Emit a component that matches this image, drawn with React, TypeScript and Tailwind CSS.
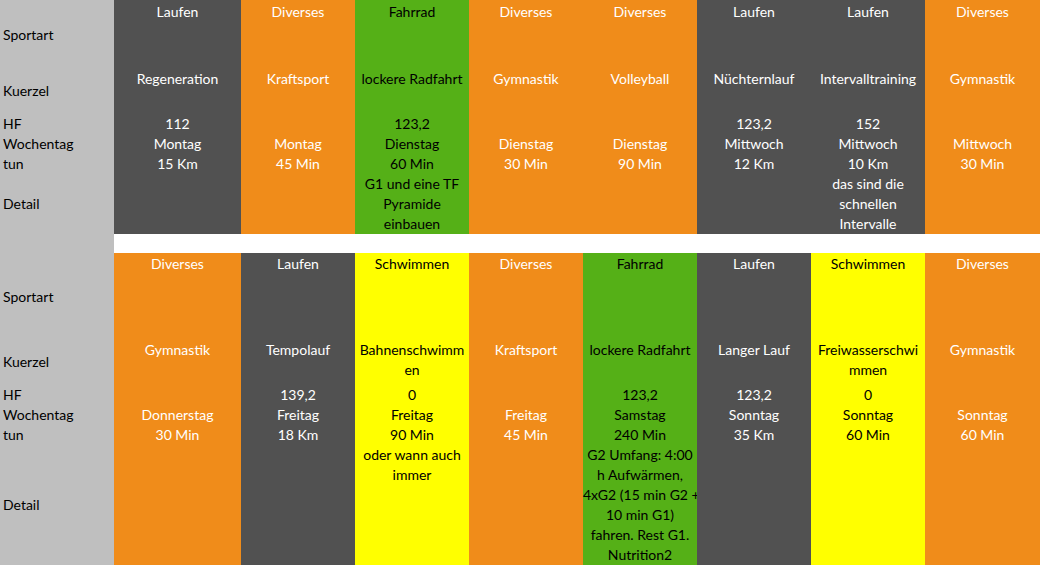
import React from "react";

type Tone = "dark" | "orange" | "green" | "yellow";

type Entry = {
  tone: Tone;
  sport: string;
  kuerzel: string[];
  rest: string[];
};

// Excel-like week plan: two blocks of 8 day-columns, label column on the left.
const TONE: Record<Tone, string> = {
  dark: "bg-[#515151] text-white",
  orange: "bg-[#f08c1a] text-white",
  green: "bg-[#55b017] text-black",
  yellow: "bg-[#ffff00] text-black",
};

const WIDTHS = ["w-[127px]", "w-[114px]", "w-[114px]", "w-[114px]", "w-[114px]", "w-[114px]", "w-[114px]", "w-[115px]"];

const WEEK_ONE: Entry[] = [
  { tone: "dark", sport: "Laufen", kuerzel: ["Regeneration"], rest: ["112", "Montag", "15 Km"] },
  { tone: "orange", sport: "Diverses", kuerzel: ["Kraftsport"], rest: ["", "Montag", "45 Min"] },
  {
    tone: "green",
    sport: "Fahrrad",
    kuerzel: ["lockere Radfahrt"],
    rest: ["123,2", "Dienstag", "60 Min", "G1 und eine TF", "Pyramide", "einbauen"],
  },
  { tone: "orange", sport: "Diverses", kuerzel: ["Gymnastik"], rest: ["", "Dienstag", "30 Min"] },
  { tone: "orange", sport: "Diverses", kuerzel: ["Volleyball"], rest: ["", "Dienstag", "90 Min"] },
  { tone: "dark", sport: "Laufen", kuerzel: ["Nüchternlauf"], rest: ["123,2", "Mittwoch", "12 Km"] },
  {
    tone: "dark",
    sport: "Laufen",
    kuerzel: ["Intervalltraining"],
    rest: ["152", "Mittwoch", "10 Km", "das sind die", "schnellen", "Intervalle"],
  },
  { tone: "orange", sport: "Diverses", kuerzel: ["Gymnastik"], rest: ["", "Mittwoch", "30 Min"] },
];

const WEEK_TWO: Entry[] = [
  { tone: "orange", sport: "Diverses", kuerzel: ["Gymnastik"], rest: ["", "Donnerstag", "30 Min"] },
  { tone: "dark", sport: "Laufen", kuerzel: ["Tempolauf"], rest: ["139,2", "Freitag", "18 Km"] },
  {
    tone: "yellow",
    sport: "Schwimmen",
    kuerzel: ["Bahnenschwimm", "en"],
    rest: ["0", "Freitag", "90 Min", "oder wann auch", "immer"],
  },
  { tone: "orange", sport: "Diverses", kuerzel: ["Kraftsport"], rest: ["", "Freitag", "45 Min"] },
  {
    tone: "green",
    sport: "Fahrrad",
    kuerzel: ["lockere Radfahrt"],
    rest: [
      "123,2",
      "Samstag",
      "240 Min",
      "G2 Umfang: 4:00",
      "h Aufwärmen,",
      "4xG2 (15 min G2 +",
      "10 min G1)",
      "fahren. Rest G1.",
      "Nutrition2",
    ],
  },
  { tone: "dark", sport: "Laufen", kuerzel: ["Langer Lauf"], rest: ["123,2", "Sonntag", "35 Km"] },
  {
    tone: "yellow",
    sport: "Schwimmen",
    kuerzel: ["Freiwasserschwi", "mmen"],
    rest: ["0", "Sonntag", "60 Min"],
  },
  { tone: "orange", sport: "Diverses", kuerzel: ["Gymnastik"], rest: ["", "Sonntag", "60 Min"] },
];

function Line({ text }: { text: string }) {
  return <div className="h-5 whitespace-nowrap">{text || "\u00a0"}</div>;
}

function DayColumn({ entry, width, head }: { entry: Entry; width: string; head: string }) {
  return (
    <div className={`${width} ${TONE[entry.tone]} flex h-full shrink-0 flex-col text-center`}>
      <div className={head}>
        <Line text={entry.sport} />
      </div>
      <div className="h-[45px]">
        {entry.kuerzel.map((k, i) => (
          <Line key={i} text={k} />
        ))}
      </div>
      <div>
        {entry.rest.map((r, i) => (
          <Line key={i} text={r} />
        ))}
      </div>
    </div>
  );
}

function Week({ entries, height, head }: { entries: Entry[]; height: string; head: string }) {
  return (
    <div className={`flex ${height}`}>
      {entries.map((entry, i) => (
        <DayColumn key={i} entry={entry} width={WIDTHS[i]} head={head} />
      ))}
    </div>
  );
}

function Labels() {
  return (
    <div className="flex h-[565px] w-[114px] shrink-0 flex-col bg-[#bfbfbf] pl-[3px] text-black">
      <div className="mt-[25px] h-5">Sportart</div>
      <div className="mt-[36px] h-5">Kuerzel</div>
      <div className="mt-[13px] h-5">HF</div>
      <div className="h-5">Wochentag</div>
      <div className="h-5">tun</div>
      <div className="mt-[20px] h-5">Detail</div>

      <div className="mt-[73px] h-5">Sportart</div>
      <div className="mt-[45px] h-5">Kuerzel</div>
      <div className="mt-[13px] h-5">HF</div>
      <div className="h-5">Wochentag</div>
      <div className="h-5">tun</div>
      <div className="mt-[50px] h-5">Detail</div>
    </div>
  );
}

export default function App() {
  return (
    <div
      className="flex h-[565px] w-[1040px] overflow-hidden bg-white text-[14px] leading-5"
      style={{ fontFamily: "Lato, 'Open Sans', sans-serif" }}
    >
      <Labels />
      <div className="flex flex-1 flex-col">
        <Week entries={WEEK_ONE} height="h-[234px]" head="h-[69px] pt-[2px]" />
        <div className="h-[19px] bg-white" />
        <Week entries={WEEK_TWO} height="h-[312px]" head="h-[87px] pt-px" />
      </div>
    </div>
  );
}
